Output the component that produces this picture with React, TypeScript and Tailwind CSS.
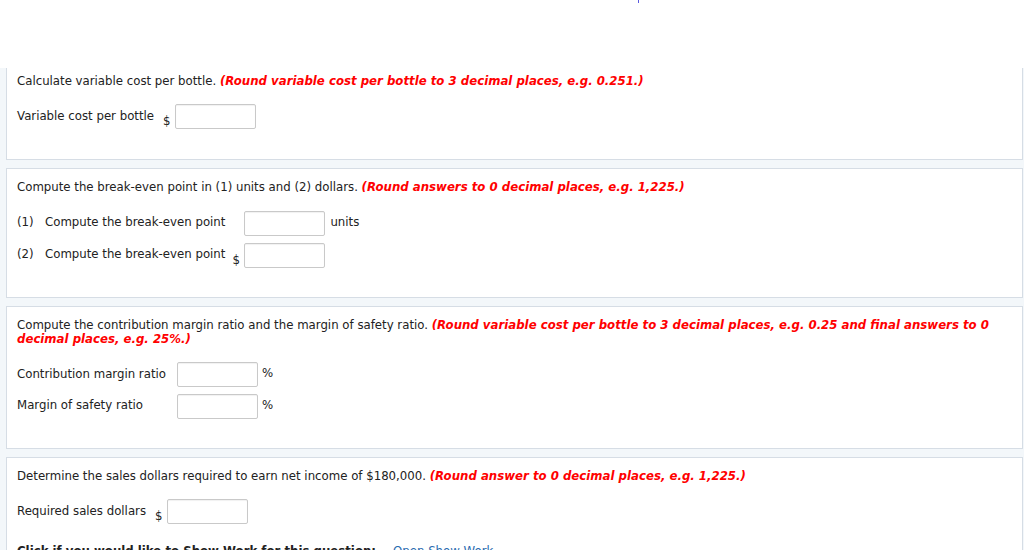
import React from 'react';

const Hint = ({ children }: { children: React.ReactNode }) => (
  <span className="font-bold italic text-[#ff0000]">{children}</span>
);

const Box = () => (
  <div className="w-[81px] h-[25px] border border-[#c9c9c9] rounded-[2px] bg-white shadow-[inset_0_1px_1px_rgba(0,0,0,0.06)]" />
);

const Panel = ({ first, children }: { first?: boolean; children: React.ReactNode }) => (
  <div
    className={`ml-[6px] mr-[1px] bg-white border-x border-b border-[#d6dde5] pl-[10px] pr-[10px] ${
      first ? 'pt-[6px] pb-[30px]' : 'mt-[8px] border-t pt-[11px] pb-[29px]'
    }`}
  >
    {children}
  </div>
);

export default function App() {
  return (
    <div className="w-[1024px] h-[550px] overflow-hidden bg-white text-[11.75px] leading-[14px] text-[#222] font-['DejaVu_Sans',Verdana,sans-serif]">
      {/* top strip */}
      <div className="h-[68px] bg-white relative">
        <div className="absolute left-[638px] top-0 w-[1px] h-[3px] bg-[#5a5ae0]" />
      </div>

      <div className="bg-[#f3f7fa] pb-[20px]">
        {/* variable cost */}
        <Panel first>
          <p>
            Calculate variable cost per bottle. <Hint>(Round variable cost per bottle to 3 decimal places, e.g. 0.251.)</Hint>
          </p>
          <div className="mt-[16px] grid grid-cols-[auto_12px_auto_auto] items-center w-max">
            <span className="pr-[9px] self-start pt-[5px]">Variable cost per bottle</span>
            <span className="self-end mb-[1px]">$</span>
            <Box />
            <span />
          </div>
        </Panel>

        {/* break-even */}
        <Panel>
          <p>
            Compute the break-even point in (1) units and (2) dollars. <Hint>(Round answers to 0 decimal places, e.g. 1,225.)</Hint>
          </p>
          <div className="mt-[17px] grid grid-cols-[auto_12px_auto_auto] items-center gap-y-[7px] w-max">
            <span className="pr-[7px] self-start pt-[4px]">
              <span className="inline-block w-[28px]">(1)</span>Compute the break-even point
            </span>
            <span />
            <Box />
            <span className="pl-[5px] -mt-[4px]">units</span>

            <span className="pr-[7px] self-start pt-[4px]">
              <span className="inline-block w-[28px]">(2)</span>Compute the break-even point
            </span>
            <span className="self-end mb-[1px]">$</span>
            <Box />
            <span />
          </div>
        </Panel>

        {/* ratios */}
        <Panel>
          <p>
            Compute the contribution margin ratio and the margin of safety ratio.{' '}
            <Hint>
              (Round variable cost per bottle to 3 decimal places, e.g. 0.25 and final answers to 0 decimal places, e.g. 25%.)
            </Hint>
          </p>
          <div className="mt-[16px] grid grid-cols-[auto_auto_auto] items-center gap-y-[7px] w-max">
            <span className="pr-[11px] self-start pt-[5px]">Contribution margin ratio</span>
            <Box />
            <span className="pl-[4px] -mt-[3px]">%</span>

            <span className="pr-[11px] self-start pt-[4px]">Margin of safety ratio</span>
            <Box />
            <span className="pl-[4px] -mt-[3px]">%</span>
          </div>
        </Panel>

        {/* sales dollars */}
        <Panel>
          <p>
            Determine the sales dollars required to earn net income of $180,000.{' '}
            <Hint>(Round answer to 0 decimal places, e.g. 1,225.)</Hint>
          </p>
          <div className="mt-[16px] grid grid-cols-[auto_12px_auto] items-center w-max">
            <span className="pr-[9px] self-start pt-[5px]">Required sales dollars</span>
            <span className="self-end mb-[1px]">$</span>
            <Box />
          </div>
          <p className="mt-[20px]">
            <span className="font-bold">Click if you would like to Show Work for this question:</span>
            <a className="ml-[17px] text-[#2a6bb0]">Open Show Work</a>
          </p>
        </Panel>
      </div>
    </div>
  );
}
